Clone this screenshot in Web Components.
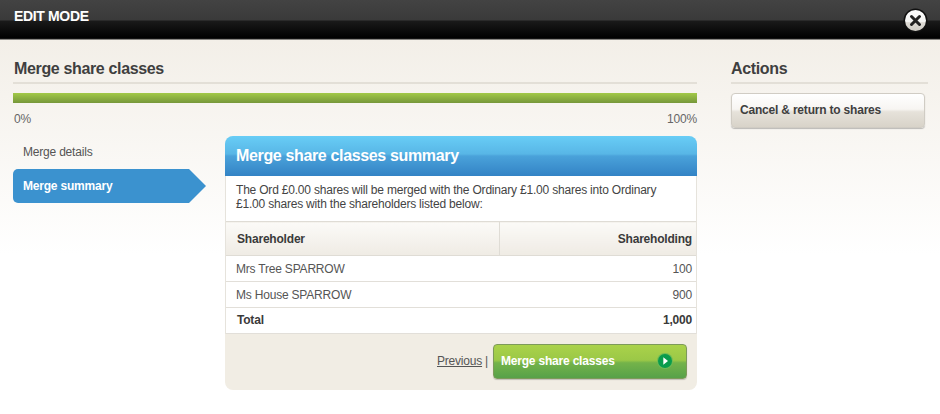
<!DOCTYPE html>
<html>
<head>
<meta charset="utf-8">
<title>Merge share classes</title>
<style>
  html, body { margin: 0; height: 100%; }
  body {
    width: 940px;
    height: 414px;
    overflow: hidden;
    font-family: "Liberation Sans", Arial, sans-serif;
    font-size: 12px;
    letter-spacing: -0.2px;
    color: #444;
    background: #fff;
  }
</style>
</head>
<body>
<edit-bar>EDIT MODE</edit-bar>
<page-shell>
  <section-title>Merge share classes</section-title>
  <progress-bar></progress-bar>
  <wizard-layout>
    <step-nav slot="nav"></step-nav>
    <summary-panel heading="Merge share classes summary">
      The Ord £0.00 shares will be merged with the Ordinary £1.00 shares into Ordinary £1.00 shares with the shareholders listed below:
    </summary-panel>
  </wizard-layout>
  <section-title slot="aside">Actions</section-title>
  <cancel-button slot="aside">Cancel &amp; return to shares</cancel-button>
</page-shell>

<script>
function define(name, html, setup) {
  customElements.define(name, class extends HTMLElement {
    connectedCallback() {
      if (this.shadowRoot) return;
      const shadow = this.attachShadow({ mode: "open" });
      shadow.innerHTML = html;
      if (setup) setup(this, shadow);
    }
  });
}

define("edit-bar", `
  <style>
    :host {
      display: flex;
      align-items: flex-start;
      justify-content: space-between;
      height: 40px;
      padding: 9px 12px 0 14px;
      box-sizing: border-box;
      background: linear-gradient(#434343 0, #3a3a3a 20px, #1a1a1a 21px, #000 38px, #222 39px, #efebe3 40px);
      color: #fff;
      font-weight: bold;
      font-size: 14px;
      letter-spacing: -0.35px;
      line-height: 15px;
    }
    svg { display: block; margin-top: -1px; }
  </style>
  <slot></slot>
  <svg width="25" height="25" viewBox="0 0 25 25">
    <defs>
      <linearGradient id="g" x1="0" y1="0" x2="0" y2="1">
        <stop offset="0" stop-color="#fdfdfd"/>
        <stop offset=".55" stop-color="#f4f4f2"/>
        <stop offset=".6" stop-color="#dedbd5"/>
        <stop offset="1" stop-color="#cfccc5"/>
      </linearGradient>
    </defs>
    <circle cx="12.5" cy="12.5" r="12" fill="#111"/>
    <circle cx="12.5" cy="12.5" r="10.5" fill="url(#g)"/>
    <path d="M8.5 8.5l8 8M16.5 8.5l-8 8" stroke="#222" stroke-width="3" stroke-linecap="round"/>
  </svg>
`);

define("page-shell", `
  <style>
    :host {
      display: grid;
      grid-template-columns: 684px 197px;
      column-gap: 34px;
      padding: 0 12px 0 13px;
      height: 374px;
      box-sizing: border-box;
      background: linear-gradient(#f3efe8 0, #fff 215px);
    }
    .main, .aside { padding-top: 19px; }
  </style>
  <div class="main"><slot></slot></div>
  <div class="aside"><slot name="aside"></slot></div>
`);

define("section-title", `
  <style>
    :host {
      display: block;
      height: 23px;
      font-size: 16px;
      letter-spacing: -0.35px;
      line-height: 19px;
      font-weight: bold;
      color: #3f3f3f;
      padding-left: 1px;
      border-bottom: 2px solid #e3dfd7;
    }
    :host([slot="aside"]) { padding-left: 0; }
  </style>
  <slot></slot>
`);

define("progress-bar", `
  <style>
    :host { display: block; margin-top: 9px; color: #666; }
    .track {
      height: 10px;
      background: linear-gradient(#a2c948, #76973a);
    }
    .labels {
      display: flex;
      justify-content: space-between;
      margin-top: 9px;
      line-height: 15px;
      padding-left: 1px;
    }
  </style>
  <div class="track"></div>
  <div class="labels"><span>0%</span><span>100%</span></div>
`);

define("wizard-layout", `
  <style>
    :host {
      display: flex;
      align-items: flex-start;
      gap: 19px;
      margin-top: 8px;
    }
  </style>
  <slot name="nav"></slot>
  <slot></slot>
`);

define("step-nav", `
  <style>
    :host {
      display: block;
      width: 193px;
      flex: none;
    }
    .item {
      height: 34px;
      line-height: 34px;
      padding-left: 10px;
      color: #555;
    }
    .item:first-child {
      height: 33px;
      padding-top: 1px;
    }
    .active {
      position: relative;
      width: 175px;
      box-sizing: border-box;
      background: #3b92cf;
      color: #fff;
      font-weight: bold;
      border-radius: 5px 0 0 5px;
    }
    .active svg { position: absolute; left: 175px; top: 0; display: block; }
  </style>
  <div class="item">Merge details</div>
  <div class="item active">Merge summary
    <svg width="18" height="34" viewBox="0 0 18 34"><path d="M0 0h1l17 17L1 34H0z" fill="#3b92cf"/></svg>
  </div>
`);

define("summary-panel", `
  <style>
    :host {
      display: block;
      width: 472px;
      margin-top: 1px;
      background: #f1ede4;
      border-radius: 8px;
      overflow: hidden;
    }
    h2 {
      margin: 0;
      height: 40px;
      padding-left: 11px;
      font-size: 16px;
      letter-spacing: -0.35px;
      line-height: 40px;
      color: #fff;
      background: linear-gradient(#68cdf6 0, #58b6e6 18px, #4aa2da 20px, #3383c5 40px);
    }
    .body {
      border: solid #e6e3dc;
      border-width: 0 1px;
      background: #fff;
    }
    p {
      margin: 0;
      height: 45px;
      padding: 7px 10px 0;
      box-sizing: border-box;
      line-height: 14px;
      color: #444;
    }
    table {
      width: 100%;
      border-collapse: collapse;
      font-size: 12px;
    }
    th {
      height: 34px;
      padding: 0 4px 0 11px;
      box-sizing: border-box;
      text-align: left;
      color: #3a3a3a;
      background: linear-gradient(#fbfaf7, #efebe4);
      border-top: 1px solid #dfdcd5;
      border-bottom: 1px solid #dfdcd5;
    }
    th + th { border-left: 1px solid #dfdcd5; width: 197px; text-align: right; }
    td {
      height: 26px;
      padding: 0 4px 0 10px;
      box-sizing: border-box;
      color: #555;
      border-bottom: 1px solid #e2dfd9;
    }
    td + td { text-align: right; }
    .total td { font-weight: bold; color: #3a3a3a; padding-left: 11px; padding-bottom: 2px; }
    .total td + td { padding-left: 0; }
    .foot {
      display: flex;
      justify-content: flex-end;
      align-items: center;
      gap: 3px;
      height: 56px;
      padding: 0 10px 2px 0;
      box-sizing: border-box;
      color: #555;
    }
    a { color: #555; text-decoration: underline; }
  </style>
  <h2></h2>
  <div class="body">
    <p><slot></slot></p>
    <table>
      <tr><th>Shareholder</th><th>Shareholding</th></tr>
      <tr><td>Mrs Tree SPARROW</td><td>100</td></tr>
      <tr><td>Ms House SPARROW</td><td>900</td></tr>
      <tr class="total"><td>Total</td><td>1,000</td></tr>
    </table>
  </div>
  <div class="foot">
    <a href="#">Previous</a> <span>|</span>
    <go-button>Merge share classes</go-button>
  </div>
`, (host, shadow) => {
  shadow.querySelector("h2").textContent = host.getAttribute("heading");
});

define("go-button", `
  <style>
    :host {
      display: flex;
      align-items: center;
      justify-content: space-between;
      width: 194px;
      height: 35px;
      margin-left: 2px;
      padding: 0 13px 0 7px;
      box-sizing: border-box;
      border: 1px solid #7d9a5a;
      border-radius: 4px;
      background: linear-gradient(#aad24a 0, #9bc847 46%, #74b34a 54%, #57a149 100%);
      color: #fff;
      font-weight: bold;
      box-shadow: 0 1px 1px rgba(0,0,0,.2);
    }
    svg { display: block; }
  </style>
  <slot></slot>
  <svg width="16" height="16" viewBox="0 0 16 16">
    <circle cx="8" cy="8" r="8" fill="#6fbb57"/>
    <circle cx="8" cy="8" r="7" fill="#0a9c4c"/>
    <path d="M6.3 4.3L11 8l-4.7 3.8z" fill="#fff"/>
  </svg>
`);

define("cancel-button", `
  <style>
    :host {
      display: block;
      width: 194px;
      height: 35px;
      margin-top: 9px;
      padding-left: 8px;
      box-sizing: border-box;
      border: 1px solid #d0ccc4;
      border-radius: 4px;
      background: linear-gradient(#fff 0, #f7f5f2 46%, #e6e2da 54%, #d8d3c9 100%);
      box-shadow: 0 1px 1px rgba(0,0,0,.25);
      color: #3f3f3f;
      font-weight: bold;
      line-height: 33px;
    }
  </style>
  <slot></slot>
`);
</script>
</body>
</html>
